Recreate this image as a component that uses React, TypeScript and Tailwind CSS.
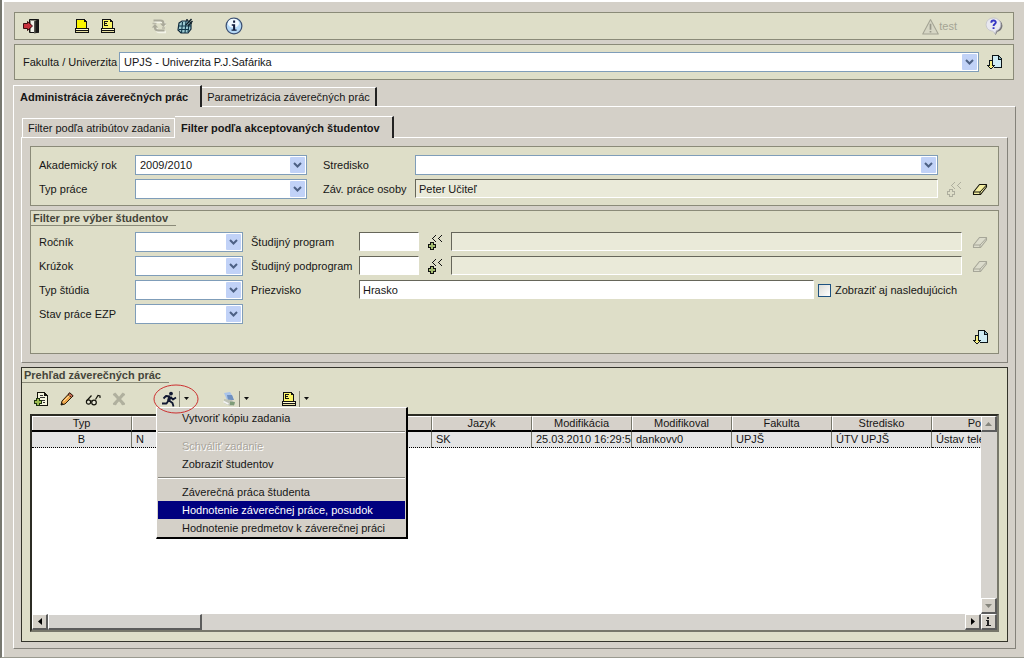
import type { ReactNode } from 'react';
import clsx from 'clsx';

/* ---------- icons ---------- */

function Svg({ children, crisp = true, className = 'w-4 h-4' }: { children: ReactNode; crisp?: boolean; className?: string }) {
  return (
    <svg
      viewBox="0 0 16 16"
      aria-hidden="true"
      fill="none"
      shapeRendering={crisp ? 'crispEdges' : 'auto'}
      className={clsx('block shrink-0', className)}
    >
      {children}
    </svg>
  );
}

const ExitIcon = () => (
  <Svg crisp={false}>
    <path d="M6.500 1.500h9v13h-9z" fill="#8c8c80" stroke="#111" />
    <path d="M11 3.500l4-2v13l-4 1z" fill="#55554e" />
    <path d="M12.500 2.800l3-1.300v13l-3 .8z" fill="#1c1c1a" />
    <path d="M8 3h3v11H8z" fill="#f4f4ec" />
    <path d="M.5 5.500h4v-2l5 4.500-5 4.500v-2h-4z" fill="#c8303c" stroke="#3a0a0e" />
  </Svg>
);

const PrinterIcon = ({ letter = false }: { letter?: boolean }) => (
  <Svg>
    <path d="M2 1h9v1h1v1h1v8H2z" fill="#111" />
    <path d="M3 2h7v2h2v6H3z" fill={letter ? '#fbf566' : '#fbf500'} />
    <path d="M1 10h14v5H1z" fill="#111" />
    <path d="M2 11h12v1H2z" fill="#fffbd0" />
    <path d="M2 13h12v1H2z" fill="#e8e0a0" />
    {letter && <path d="M4 3h4v1H5v1h2v1H5v1h3v1H4z" fill="#111" />}
  </Svg>
);

const RefreshIcon = () => (
  <Svg crisp={false}>
    <path d="M2.500 3h7q3 0 3 3v1M14 13H8q-3.500 0-3.500-3V9" stroke="#f4f4e8" strokeWidth="2.400" transform="translate(1 1)" />
    <path d="M2.500 2.500h7q3 0 3 3v1M13.500 12.500H7.500q-3.500 0-3.500-3v-1" stroke="#aaa99a" strokeWidth="2.200" />
    <path d="M9 5.500h6.500L12.300 9zM.8 9.500h6.400L4 6z" fill="#aaa99a" />
    <path d="M1.500 5.500h4M11 10h3" stroke="#b8b7a8" strokeWidth="1.500" />
  </Svg>
);

const GlobeIcon = () => (
  <Svg crisp={false}>
    <path d="M2 5l3-2h7l2 2v6l-3 4H4l-3-3z" fill="#9ccad2" stroke="#10283a" strokeWidth="1.200" />
    <path d="M1 8h13M2 11.500h10M5.500 4L4.500 15M9 3L8 15M12 6l-1 8" stroke="#10384a" strokeWidth="1.100" />
    <path d="M9 7l5.500-6M11 8l4.500-5M9 2h2M13 5h2" stroke="#12222c" strokeWidth="1.400" />
  </Svg>
);

const InfoIcon = () => (
  <Svg crisp={false} className="w-[18px] h-[18px]">
    <circle cx="8" cy="8" r="7" fill="#b4d8f6" stroke="#3b4f72" strokeWidth="1.100" />
    <ellipse cx="7.500" cy="5.500" rx="5" ry="4" fill="#f0f9ff" />
    <path d="M7.200 3.200h1.800v1.800H7.200zM6 6.500h3V11h1.300v1.200H5.800V11h1.400V7.700H6z" fill="#101c3c" />
  </Svg>
);

const WarningIcon = () => (
  <Svg crisp={false} className="w-[17px] h-[17px]">
    <path d="M8 1.500L15.300 15H.7z" fill="#d6d6c4" stroke="#a4a494" strokeLinejoin="round" />
    <path d="M8 5.500V11M8 12.200v1.500" stroke="#98988a" strokeWidth="1.600" />
  </Svg>
);

const HelpIcon = () => (
  <Svg crisp={false} className="w-[18px] h-[18px]">
    <path d="M9 2a6 5.600 0 016.500 5.600c0 3-2 5-4.500 5.600L9.500 16 8 13.500z" fill="#77777c" />
    <path d="M7.500 .8a6.500 5.800 0 016.500 5.800c0 3-1.800 5-4 5.600l-.8 2.600-2.500-2.300C3.500 12.300 1 10 1 6.600A6.500 5.800 0 017.500 .8z" fill="#e8e8f0" stroke="#c0c0c8" strokeWidth=".7" />
    <path d="M5.600 5c0-2.600 4-2.400 4-.3C9.600 6.200 7.600 6.100 7.600 7.900M7.600 9v1.600" stroke="#3434c4" strokeWidth="1.700" />
  </Svg>
);

const LoadIcon = () => (
  <Svg>
    <path d="M5 1h7v1h1v1h1v1h1v10H7v-1H5z" fill="#0c1418" />
    <path d="M6 2h5v4h3v7H6z" fill="#cfecf4" />
    <path d="M12 3h1v1h1v1h-2z" fill="#7fb0bc" />
    <path d="M2 6h4v5h2v1H7v1H6v1H5v1H3v-1H2v-1H1v-1H0v-1h2z" fill="#0c1418" />
    <path d="M3 7h2v5h1v1H5v1H3v-1H2v-1h1z" fill="#f6ec80" />
  </Svg>
);

const EraserIcon = ({ off = false }: { off?: boolean }) => (
  <Svg crisp={false}>
    <path
      d="M1.500 11L7.500 3.500h7v2.500L8.500 13.500h-7z"
      fill={off ? '#dcdccc' : '#f5efa0'}
      stroke={off ? '#a6a698' : '#15150c'}
      strokeWidth="1.100"
      strokeLinejoin="round"
    />
    <path d="M1.500 11H8l6.500-7M8 11v2.500" stroke={off ? '#a6a698' : '#15150c'} />
  </Svg>
);

const PickIcon = ({ off = false }: { off?: boolean }) => (
  <Svg>
    <g fill={off ? '#aeae9e' : '#111'}>
      <path d="M8 1h1v1H8zM7 2h1v1H7zM6 3h1v1H6zM5 4h1v1H5zM6 5h1v1H6zM7 6h1v1H7zM8 7h1v1H8z" />
      <path d="M14 1h1v1h-1zM13 2h1v1h-1zM12 3h1v1h-1zM11 4h1v1h-1zM12 5h1v1h-1zM13 6h1v1h-1zM14 7h1v1h-1z" />
      <path d="M3 8h4v2h2v4H7v2H3v-2H1v-4h2z" />
    </g>
    <path d="M4 9h2v2h2v2H6v2H4v-2H2v-2h2z" fill={off ? '#dedec8' : '#a4bc70'} />
  </Svg>
);

const NewIcon = () => (
  <Svg>
    <path d="M3 1h8v1h1v1h1v1h1v11H3z" fill="#14140c" />
    <path d="M4 2h6v3h3v9H4z" fill="#f4f4dc" />
    <path d="M6 4h3v1H6zM6 6h5v1H6zM8 9h3v1H8zM9 11h2v1H9z" fill="#333" />
    <path d="M2 7h4v2h2v4H6v2H2v-2H0V9h2z" fill="#1c3010" />
    <path d="M3 8h2v2h2v2H5v2H3v-2H1v-2h2z" fill="#9cbc50" />
  </Svg>
);

const PencilIcon = () => (
  <Svg crisp={false}>
    <path d="M2 14l1-4 7.500-8 3.500 3-8 8z" fill="#eda54a" stroke="#2a1a08" strokeLinejoin="round" />
    <path d="M9 3.500L10.800 1.800 14.200 4.800 12.500 6.500z" fill="#c86c58" stroke="#2a1a08" />
    <path d="M2 14l.7-2.500 1.800 1.700z" fill="#111" />
    <path d="M4.500 10.500l6-6" stroke="#ffe0a0" />
  </Svg>
);

const GlassesIcon = () => (
  <Svg crisp={false}>
    <path d="M1.500 10L6.500 4.500M10.500 8.500L13 4.500l2 .5v2" stroke="#14140c" strokeWidth="1.200" />
    <circle cx="3.500" cy="11" r="2.100" fill="#e8e8d8" stroke="#14140c" strokeWidth="1.200" />
    <circle cx="9" cy="11.500" r="2.300" fill="#e8e8d8" stroke="#14140c" strokeWidth="1.200" />
    <path d="M5.500 10q1-1 1.500.5" stroke="#14140c" />
  </Svg>
);

const DeleteIcon = () => (
  <Svg crisp={false}>
    <path d="M3 2.500l10 11M13 2.500l-10 11" stroke="#b0b09e" strokeWidth="3.200" />
    <path d="M2 3.500h3.500M10.500 3.500H14M2 13h3.500M10.500 13H14" stroke="#b0b09e" strokeWidth="1.500" />
  </Svg>
);

const RunIcon = () => (
  <Svg crisp={false}>
    <circle cx="10" cy="2.600" r="1.900" fill="#101830" />
    <path d="M9 5.500L7.500 10" stroke="#101830" strokeWidth="3.200" />
    <path d="M9 5.500L5 5 2.500 7.500M9.500 6l2.500 2.500 3-2M7.500 9.500L5.500 12.500H1M8 9.500l3.500 2.500 1 3.500" stroke="#101830" strokeWidth="1.800" strokeLinejoin="round" />
  </Svg>
);

const ExportIcon = () => (
  <Svg crisp={false}>
    <path d="M3 2l6-1 3 5-6 3z" fill="#a9c4ea" />
    <path d="M6 4h5l2 5-6 0z" fill="#6f90c0" />
    <path d="M3 8l8 1 3 4-5 2-6-3z" fill="#bfc3b6" />
    <path d="M9 10.500l5 .5-1 3.500-4-.5z" fill="#7f9c78" />
    <path d="M2.500 10.500l5 2.500" stroke="#f4f4f4" strokeWidth="1.500" />
  </Svg>
);

/* ---------- controls ---------- */

interface IconButtonProps {
  label: string;
  className?: string;
  children: ReactNode;
}

function IconButton({ label, className, children }: IconButtonProps) {
  return (
    <button type="button" aria-label={label} className={clsx('flex shrink-0 items-center justify-center', className)}>
      {children}
    </button>
  );
}

function Select({ id, value = '', className }: { id: string; value?: string; className?: string }) {
  return (
    <div className={clsx('relative h-5', className)}>
      <select id={id} className="block h-5 w-full appearance-none border border-[#7f9db9] bg-white pl-1 pr-5 leading-none outline-none">
        <option>{value}</option>
      </select>
      <span className="pointer-events-none absolute inset-y-[2px] right-[2px] flex w-[15px] items-center justify-center rounded-[1px] bg-[#c1d2f7]">
        <svg viewBox="0 0 9 6" className="h-[6px] w-[9px]" fill="none" aria-hidden="true">
          <path d="M1 1l3.500 3.500L8 1" stroke="#4d6185" strokeWidth="2" />
        </svg>
      </span>
    </div>
  );
}

interface TextFieldProps {
  id: string;
  label?: string;
  value?: string;
  readOnly?: boolean;
  className?: string;
}

function TextField({ id, label, value = '', readOnly = false, className }: TextFieldProps) {
  return (
    <input
      id={id}
      aria-label={label}
      defaultValue={value}
      readOnly={readOnly}
      className={clsx(
        'mb-px h-[19px] min-w-0 border border-t-[#66665a] border-r-white border-b-white border-l-[#66665a] px-[3px] leading-none outline-none',
        readOnly ? 'bg-[#eaead9]' : 'bg-white',
        className,
      )}
    />
  );
}

function GroupTitle({ children }: { children: ReactNode }) {
  return (
    <h2 className="flex w-fit border-b border-[#8a8a78] pr-[8px] pl-[2px] text-[11px] leading-[14px] font-bold text-[#45453a]">{children}</h2>
  );
}

function Group({ title, className, children }: { title?: string; className?: string; children: ReactNode }) {
  return (
    <section className={clsx('border border-[#8a8a78] bg-[#dedec8]', className)}>
      {title && <GroupTitle>{title}</GroupTitle>}
      {children}
    </section>
  );
}

function Drop({ label }: { label: string }) {
  return (
    <button type="button" aria-label={label} className="ml-[2px] flex h-4 w-3 items-center border-l border-[#8a8a7a] pl-1">
      <svg viewBox="0 0 5 3" className="h-[3px] w-[5px]" aria-hidden="true">
        <path d="M0 0h5L2.500 3z" fill="#111" />
      </svg>
    </button>
  );
}

/* ---------- menu ---------- */

function MenuItem({ children, active, disabled }: { children: ReactNode; active?: boolean; disabled?: boolean }) {
  return (
    <button
      type="button"
      role="menuitem"
      disabled={disabled}
      className={clsx(
        'block h-[18px] w-full pl-6 text-left leading-[18px] whitespace-nowrap',
        active && 'bg-[#00007f] text-white',
        disabled && 'text-[#a9a59c] [text-shadow:1px_1px_0_#fff]',
      )}
    >
      {children}
    </button>
  );
}

const MenuLine = () => <div className="my-1 h-[2px] border-t border-t-[#84827a] bg-white" />;

function ActionMenu() {
  return (
    <div
      role="menu"
      className="absolute top-4 left-[-5px] z-10 w-[252px] border-t border-r-2 border-b-2 border-l border-t-white border-r-black border-b-black border-l-white bg-[#d4d0c8] px-px pt-px"
    >
      <MenuItem>Vytvoriť kópiu zadania</MenuItem>
      <MenuLine />
      <MenuItem disabled>Schváliť zadanie</MenuItem>
      <MenuItem>Zobraziť študentov</MenuItem>
      <MenuLine />
      <MenuItem>Záverečná práca študenta</MenuItem>
      <MenuItem active>Hodnotenie záverečnej práce, posudok</MenuItem>
      <MenuItem>Hodnotenie predmetov k záverečnej práci</MenuItem>
    </div>
  );
}

/* ---------- table ---------- */

const columns = ['Typ', '', '', '', 'Jazyk', 'Modifikácia', 'Modifikoval', 'Fakulta', 'Stredisko', 'Popis'];
const row = ['B', 'N', '', '', 'SK', '25.03.2010 16:29:56', 'dankovv0', 'UPJŠ', 'ÚTV UPJŠ', 'Ústav telesnej výchovy'];

const scrollBtn =
  'flex h-4 w-4 shrink-0 items-center justify-center border-t border-l border-r-2 border-b-2 border-t-white border-l-white border-r-[#5c5c5c] border-b-[#5c5c5c] bg-[#d4d0c8]';

function ThesisTable() {
  return (
    <div className="flex min-h-[160px] flex-1 flex-col border-2 border-t-[#2c2c24] border-r-[#77776a] border-b-[#77776a] border-l-[#2c2c24] bg-white">
      <div className="flex flex-1">
        <div className="relative min-w-0 flex-1 overflow-hidden">
          <table className="w-[1000px] table-fixed border-separate border-spacing-0">
            <thead>
              <tr>
                {columns.map((name, i) => (
                  <th
                    key={i}
                    className="h-4 border-t border-r border-b-2 border-t-white border-r-[#77776a] border-b-black bg-[#d6d1ca] p-0 text-center leading-[13px] font-normal shadow-[inset_1px_0_#fff]"
                  >
                    {name}
                  </th>
                ))}
              </tr>
            </thead>
            <tbody>
              <tr>
                {row.map((cell, i) => (
                  <td
                    key={i}
                    className={clsx(
                      'h-4 overflow-hidden border-r border-b border-dotted border-b-black bg-[#e4e4e4] p-0 leading-[15px] whitespace-nowrap [border-right-style:solid] border-r-[#77776a]',
                      i === 0 ? 'text-center' : 'pl-1',
                    )}
                  >
                    {cell}
                  </td>
                ))}
              </tr>
            </tbody>
          </table>
        </div>
        <div className="flex w-4 flex-col justify-between bg-[#d6d3ce]">
          <button type="button" aria-label="Hore" className={scrollBtn}>
            <svg viewBox="0 0 7 4" className="h-1 w-[7px]"><path d="M0 4h7L3.500 0z" fill="#85857c" /></svg>
          </button>
          <button type="button" aria-label="Dole" className={scrollBtn}>
            <svg viewBox="0 0 7 4" className="h-1 w-[7px]"><path d="M0 0h7L3.500 4z" fill="#85857c" /></svg>
          </button>
        </div>
      </div>
      <div className="flex h-4 bg-[#d6d3ce]">
        <button type="button" aria-label="Vľavo" className={scrollBtn}>
          <svg viewBox="0 0 4 7" className="h-[7px] w-1"><path d="M4 0v7L0 3.500z" fill="#000" /></svg>
        </button>
        <div className="h-4 w-[16%] border-t border-r-2 border-b-2 border-l border-t-white border-r-[#5c5c5c] border-b-[#5c5c5c] border-l-white bg-[#d4d2ce]" />
        <div className="flex-1" />
        <button type="button" aria-label="Vpravo" className={scrollBtn}>
          <svg viewBox="0 0 4 7" className="h-[7px] w-1"><path d="M0 0v7l4-3.500z" fill="#000" /></svg>
        </button>
        <button type="button" aria-label="Info" className={scrollBtn}>
          <svg viewBox="0 0 5 9" className="h-[9px] w-[5px]" shapeRendering="crispEdges">
            <path d="M1 0h2v2H1zM0 3h3v5h2v1H0V8h1V4H0z" fill="#222" />
          </svg>
        </button>
      </div>
    </div>
  );
}

/* ---------- page ---------- */

function ListPanel() {
  return (
    <section className="flex flex-1 flex-col border border-[#33332a] bg-[#dedec8]">
      <GroupTitle>Prehľad záverečných prác</GroupTitle>
      <div className="flex h-[31px] items-center pl-3">
        <IconButton label="Nový"><NewIcon /></IconButton>
        <IconButton label="Upraviť" className="ml-[9px]"><PencilIcon /></IconButton>
        <IconButton label="Zobraziť" className="ml-[10px]"><GlassesIcon /></IconButton>
        <IconButton label="Zmazať" className="ml-[10px]"><DeleteIcon /></IconButton>
        <div className="relative ml-[34px] flex items-center">
          <IconButton label="Akcie"><RunIcon /></IconButton>
          <Drop label="Ponuka akcií" />
          <ActionMenu />
          <svg viewBox="0 0 46 30" className="pointer-events-none absolute top-[-7px] left-[-8px] z-20 h-[30px] w-[46px]" fill="none">
            <ellipse cx="23" cy="15" rx="22" ry="14" stroke="#cc3030" />
          </svg>
        </div>
        <div className="ml-[30px] flex items-center">
          <IconButton label="Export"><ExportIcon /></IconButton>
          <Drop label="Ponuka exportu" />
        </div>
        <div className="ml-[30px] flex items-center">
          <IconButton label="Tlač zoznamu"><PrinterIcon letter /></IconButton>
          <Drop label="Ponuka tlače" />
        </div>
      </div>
      <div className="flex flex-1 flex-col px-2 pb-[9px]">
        <ThesisTable />
      </div>
    </section>
  );
}

function StudentFilter() {
  return (
    <Group title="Filter pre výber študentov" className="mt-1 h-[144px]">
      <div className="grid gap-y-1 pt-[6px] pl-2">
        <div className="flex h-5 items-center">
          <label htmlFor="rocnik" className="w-24">Ročník</label>
          <Select id="rocnik" className="w-[108px]" />
          <label htmlFor="program" className="ml-2 w-[108px]">Študijný program</label>
          <TextField id="program" className="w-[60px]" />
          <IconButton label="Vybrať program" className="mx-2"><PickIcon /></IconButton>
          <TextField id="program-nazov" label="Názov programu" readOnly className="flex-1" />
          <IconButton label="Vymazať program" className="mx-[10px]"><EraserIcon off /></IconButton>
        </div>
        <div className="flex h-5 items-center">
          <label htmlFor="kruzok" className="w-24">Krúžok</label>
          <Select id="kruzok" className="w-[108px]" />
          <label htmlFor="podprogram" className="ml-2 w-[108px] whitespace-nowrap">Študijný podprogram</label>
          <TextField id="podprogram" className="w-[60px]" />
          <IconButton label="Vybrať podprogram" className="mx-2"><PickIcon /></IconButton>
          <TextField id="podprogram-nazov" label="Názov podprogramu" readOnly className="flex-1" />
          <IconButton label="Vymazať podprogram" className="mx-[10px]"><EraserIcon off /></IconButton>
        </div>
        <div className="flex h-5 items-center">
          <label htmlFor="studium" className="w-24">Typ štúdia</label>
          <Select id="studium" className="w-[108px]" />
          <label htmlFor="priezvisko" className="ml-2 w-[108px]">Priezvisko</label>
          <TextField id="priezvisko" value="Hrasko" className="flex-1" />
          <label className="flex w-[184px] items-center gap-1 pl-1 whitespace-nowrap">
            <input type="checkbox" className="h-[13px] w-[13px] appearance-none border border-[#1d5281] bg-linear-to-br from-[#dcdcd7] to-white" />
            Zobraziť aj nasledujúcich
          </label>
        </div>
        <div className="flex h-5 items-center">
          <label htmlFor="stav" className="w-24">Stav práce EZP</label>
          <Select id="stav" className="w-[108px]" />
        </div>
      </div>
      <div className="mt-[5px] flex justify-end pr-[9px]">
        <IconButton label="Načítať"><LoadIcon /></IconButton>
      </div>
    </Group>
  );
}

function ThesisFilter() {
  return (
    <Group className="grid gap-y-1 pt-2 pb-[6px] pl-2">
      <div className="flex h-5 items-center">
        <label htmlFor="rok" className="w-24">Akademický rok</label>
        <Select id="rok" value="2009/2010" className="w-[172px]" />
        <label htmlFor="stredisko" className="ml-4 w-[92px]">Stredisko</label>
        <Select id="stredisko" className="mr-[60px] flex-1" />
      </div>
      <div className="flex h-5 items-center">
        <label htmlFor="praca" className="w-24">Typ práce</label>
        <Select id="praca" className="w-[172px]" />
        <label htmlFor="osoba" className="ml-4 w-[92px] whitespace-nowrap">Záv. práce osoby</label>
        <TextField id="osoba" value="Peter Učiteľ" readOnly className="flex-1" />
        <IconButton label="Vybrať osobu" className="ml-2"><PickIcon off /></IconButton>
        <IconButton label="Vymazať osobu" className="mx-[10px]"><EraserIcon /></IconButton>
      </div>
    </Group>
  );
}

export default function App() {
  return (
    <main className="flex min-h-screen flex-col border-b border-l-2 border-b-[#9a9a90] border-l-[#77776f] bg-[#d4d0c8] font-['Liberation_Sans',Arial,sans-serif] text-[11px] leading-[14px] text-[#161616]">
      <div className="flex flex-1 flex-col border-t-2 border-l-2 border-white pt-[10px] pr-2 pb-2 pl-[9px]">
        <header className="mr-[2px] ml-px flex h-7 items-center border border-[#8a8a78] bg-[#dedec8] pr-[10px] pl-2">
          <IconButton label="Koniec"><ExitIcon /></IconButton>
          <IconButton label="Tlač" className="ml-[35px]"><PrinterIcon /></IconButton>
          <IconButton label="Tlač E" className="ml-[10px]"><PrinterIcon letter /></IconButton>
          <IconButton label="Obnoviť" className="ml-[35px]"><RefreshIcon /></IconButton>
          <IconButton label="Web" className="ml-[10px]"><GlobeIcon /></IconButton>
          <IconButton label="Informácie" className="ml-8"><InfoIcon /></IconButton>
          <button type="button" disabled className="ml-auto flex items-center text-[#a4a494]">
            <WarningIcon />
            test
          </button>
          <IconButton label="Pomoc" className="ml-7"><HelpIcon /></IconButton>
        </header>

        <div className="mt-1 mr-[2px] ml-px flex h-9 items-center border border-[#8a8a78] bg-[#dedec8] pr-[10px] pl-2">
          <label htmlFor="fakulta" className="w-24">Fakulta / Univerzita</label>
          <Select id="fakulta" value="UPJŠ - Univerzita P.J.Šafárika" className="flex-1" />
          <IconButton label="Načítať" className="ml-2"><LoadIcon /></IconButton>
        </div>

        <nav className="mt-[5px] flex h-[21px] items-end">
          <button type="button" className="z-10 -mb-px h-[22px] border-t border-r-2 border-l border-t-white border-r-[#222] border-l-white bg-[#d4d0c8] pr-3 pl-[6px] text-[11px] font-bold">
            Administrácia záverečných prác
          </button>
          <button type="button" className="h-[19px] border-t border-r-2 border-t-white border-r-[#222] px-[5px]">
            Parametrizácia záverečných prác
          </button>
        </nav>

        <div className="flex flex-1 flex-col border border-t-white border-r-[#84827a] border-b-[#84827a] border-l-white px-[7px] pt-[9px] pb-[6px]">
          <nav className="flex h-[21px] items-end pl-px">
            <button type="button" className="h-[19px] border-t border-r border-l border-white pr-1 pl-[5px]">
              Filter podľa atribútov zadania
            </button>
            <button type="button" className="z-10 -mb-px h-[22px] border-t border-r-2 border-t-white border-r-[#222] bg-[#d4d0c8] pr-3 pl-[6px] text-[11px] font-bold">
              Filter podľa akceptovaných študentov
            </button>
          </nav>
          <div className="mb-1 border border-t-white border-r-[#84827a] border-b-[#84827a] border-l-white p-2">
            <ThesisFilter />
            <StudentFilter />
          </div>
          <ListPanel />
        </div>
      </div>
    </main>
  );
}
